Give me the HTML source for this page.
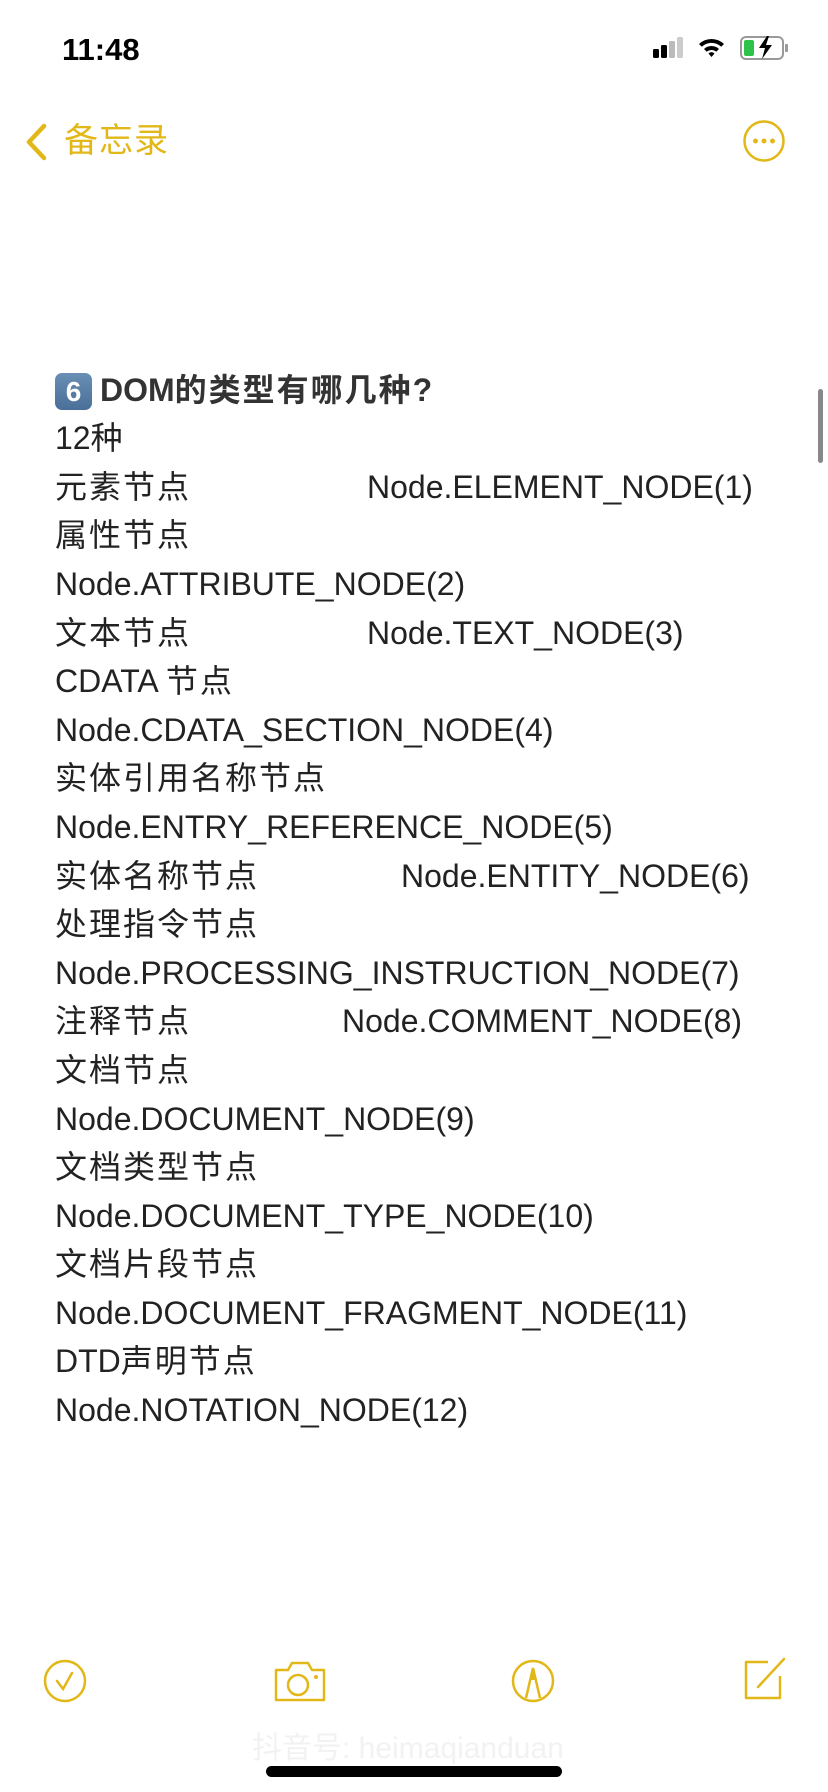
<!DOCTYPE html>
<html><head><meta charset="utf-8"><style>
body{margin:0;width:828px;height:1792px;background:#fff;position:relative;overflow:hidden;font-family:"Liberation Sans","Noto Sans CJK SC",sans-serif;color:#222}
.a{position:absolute;white-space:nowrap}
.l{position:absolute;left:55px;font-size:32px;line-height:48.6px;white-space:nowrap}
.z{letter-spacing:2px}
</style></head><body>
<div class="a" style="left:62px;top:32px;font-size:31px;font-weight:bold;color:#000">11:48</div>
<svg class="a" style="left:650px;top:34px" width="150" height="30" viewBox="0 0 150 30">
<rect x="3" y="15" width="6" height="9" rx="1.5" fill="#000"/><rect x="11" y="11" width="6" height="13" rx="1.5" fill="#000"/><rect x="19" y="7" width="6" height="17" rx="1.5" fill="#bbb"/><rect x="27" y="3" width="6" height="21" rx="1.5" fill="#ccc"/>
<path d="M49 10a18 18 0 0 1 25 0l-2.8 2.8a14 14 0 0 0-19.4 0zM54 15a11 11 0 0 1 15 0l-2.8 2.8a7 7 0 0 0-9.4 0zM58.5 19.5a4 4 0 0 1 6 0L61.5 23z" fill="#000"/>
<rect x="91" y="3" width="42" height="22" rx="5" fill="none" stroke="#999" stroke-width="2"/><rect x="94" y="6" width="10" height="16" rx="2" fill="#2ec24a"/><rect x="135" y="10" width="3" height="8" rx="1" fill="#999"/>
<path d="M117 2l-8 12h6l-3 11 10-14h-6l3-9z" fill="#000"/></svg>
<svg class="a" style="left:24px;top:123px" width="24" height="38" viewBox="0 0 24 38"><path d="M20 3L5 19l15 16" fill="none" stroke="#e2b718" stroke-width="4.5" stroke-linecap="round" stroke-linejoin="round"/></svg>
<div class="a" style="left:64px;top:119px;font-size:34px;color:#e2b718;line-height:44px;letter-spacing:1px">备忘录</div>
<svg class="a" style="left:742px;top:119px" width="44" height="44" viewBox="0 0 44 44"><circle cx="22" cy="22" r="19.5" fill="none" stroke="#e2b718" stroke-width="2.5"/><circle cx="13.5" cy="22" r="2.5" fill="#e2b718"/><circle cx="22" cy="22" r="2.5" fill="#e2b718"/><circle cx="30.5" cy="22" r="2.5" fill="#e2b718"/></svg>
<div class="a" style="left:818px;top:389px;width:5px;height:74px;border-radius:3px;background:#888"></div>
<div class="a" style="left:55px;top:373px;width:37px;height:37px;border-radius:7px;background:linear-gradient(#6a8fb5,#4a6f98);color:#fff;font-size:28px;font-weight:bold;text-align:center;line-height:37px">6</div>
<div class="l" style="top:366px;left:100px;font-weight:bold;color:#333">DOM<span class="z">的类型有哪几种</span>?</div>
<div class="l" style="top:414px">12<span class="z">种</span></div>
<div class="l z" style="top:463px">元素节点</div><div class="l" style="top:463px;left:367px">Node.ELEMENT_NODE(1)</div>
<div class="l z" style="top:511px">属性节点</div>
<div class="l" style="top:560px">Node.ATTRIBUTE_NODE(2)</div>
<div class="l z" style="top:609px">文本节点</div><div class="l" style="top:609px;left:367px">Node.TEXT_NODE(3)</div>
<div class="l" style="top:657px">CDATA <span class="z">节点</span></div>
<div class="l" style="top:706px">Node.CDATA_SECTION_NODE(4)</div>
<div class="l z" style="top:754px">实体引用名称节点</div>
<div class="l" style="top:803px">Node.ENTRY_REFERENCE_NODE(5)</div>
<div class="l z" style="top:852px">实体名称节点</div><div class="l" style="top:852px;left:401px">Node.ENTITY_NODE(6)</div>
<div class="l z" style="top:900px">处理指令节点</div>
<div class="l" style="top:949px">Node.PROCESSING_INSTRUCTION_NODE(7)</div>
<div class="l z" style="top:997px">注释节点</div><div class="l" style="top:997px;left:342px">Node.COMMENT_NODE(8)</div>
<div class="l z" style="top:1046px">文档节点</div>
<div class="l" style="top:1095px">Node.DOCUMENT_NODE(9)</div>
<div class="l z" style="top:1143px">文档类型节点</div>
<div class="l" style="top:1192px">Node.DOCUMENT_TYPE_NODE(10)</div>
<div class="l z" style="top:1240px">文档片段节点</div>
<div class="l" style="top:1289px">Node.DOCUMENT_FRAGMENT_NODE(11)</div>
<div class="l" style="top:1337px">DTD<span class="z">声明节点</span></div>
<div class="l" style="top:1386px">Node.NOTATION_NODE(12)</div>
<svg class="a" style="left:42px;top:1658px" width="46" height="46" viewBox="0 0 46 46"><circle cx="23" cy="23" r="20" fill="none" stroke="#e2b718" stroke-width="2.5"/><path d="M15 23l6 8 9-16" fill="none" stroke="#e2b718" stroke-width="2.5" stroke-linecap="round"/></svg>
<svg class="a" style="left:272px;top:1658px" width="56" height="46" viewBox="0 0 56 46"><path d="M4 12h12l4-7h16l4 7h12v30H4z" fill="none" stroke="#e2b718" stroke-width="2.5" stroke-linejoin="round"/><circle cx="26" cy="27" r="10" fill="none" stroke="#e2b718" stroke-width="2.5"/><circle cx="44" cy="19" r="2" fill="#e2b718"/></svg>
<svg class="a" style="left:510px;top:1658px" width="46" height="46" viewBox="0 0 46 46"><circle cx="23" cy="23" r="20" fill="none" stroke="#e2b718" stroke-width="2.5"/><path d="M16 40l7-30 7 30" fill="none" stroke="#e2b718" stroke-width="2.5"/><path d="M20 22h6l-3-12z" fill="#e2b718"/></svg>
<svg class="a" style="left:740px;top:1654px" width="50" height="50" viewBox="0 0 50 50"><path d="M28 8H6v36h34V22" fill="none" stroke="#e2b718" stroke-width="2.5" stroke-linejoin="round"/><path d="M18 33L44 5" stroke="#e2b718" stroke-width="2.5" stroke-linecap="round"/></svg>
<div class="a" style="left:252px;top:1723px;font-size:30px;color:#f2f2f2">抖音号: heimaqianduan</div>
<div class="a" style="left:266px;top:1766px;width:296px;height:11px;border-radius:6px;background:#000"></div>
</body></html>
